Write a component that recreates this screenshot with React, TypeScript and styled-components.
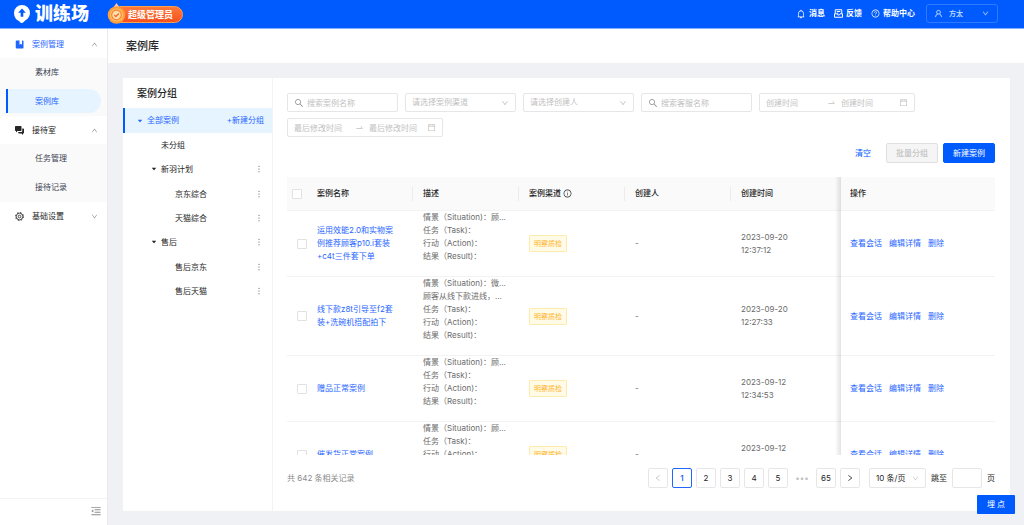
import React from 'react';
import styled, { createGlobalStyle } from 'styled-components';
import {
  AiOutlineBell,
  AiOutlineCalendar,
  AiOutlineDown,
  AiOutlineInfoCircle,
  AiOutlineLeft,
  AiOutlineMenuFold,
  AiOutlineMore,
  AiOutlineQuestionCircle,
  AiOutlineRight,
  AiOutlineSearch,
  AiOutlineSwapRight,
  AiOutlineUp,
  AiOutlineUser,
  AiFillCaretDown,
} from 'react-icons/ai';

const color = {
  primary: '#005bff',
  link: '#1f66ff',
  text: '#262626',
  sub: '#6b6b6b',
  hint: '#bfbfbf',
  border: '#e6e6e8',
  line: '#f3f3f3',
  page: '#eff1f5',
  active: '#e6f4ff',
};

const GlobalStyle = createGlobalStyle`
  *, *::before, *::after { box-sizing: border-box; }
  body {
    margin: 0;
    color: ${color.text};
    background: ${color.page};
    font: 8px/13px Inter, "Noto Sans CJK SC", sans-serif;
  }
  button, input, select { font: inherit; color: inherit; }
  button { cursor: pointer; padding: 0; border: 0; background: none; }
  a { text-decoration: none; color: inherit; }
  ul { list-style: none; margin: 0; padding: 0; }
  h1, h2 { margin: 0; }
  svg { display: block; flex: none; }
`;

const Page = styled.div`
  display: flex;
  flex-direction: column;
  height: 100vh;
`;

/* ---------- top bar ---------- */

const TopBar = styled.header`
  flex: none;
  display: flex;
  align-items: center;
  height: 29px;
  padding: 0 26px 1px 13px;
  color: #fff;
  background: ${color.primary};
  border-bottom: 1px solid #84b2ff;
`;

const Brand = styled.a`
  display: flex;
  align-items: center;
  gap: 4px;
  font-size: 18px;
  line-height: 26px;
  font-weight: 900;
`;

const RoleBadge = styled.div`
  display: flex;
  align-items: center;
  height: 22px;
  margin-left: 18px;
`;

const RoleLabel = styled.span`
  height: 17px;
  margin: 2px 0 0 -15px;
  padding: 0 9px 0 16px;
  border: 1px solid #ffa04d;
  border-radius: 9px;
  background: linear-gradient(#ff7a3a, #f5511e);
  font-size: 9px;
  line-height: 15px;
  font-weight: 700;
`;

const Medal = styled.svg`
  position: relative;
  z-index: 1;
`;

const TopLinks = styled.nav`
  display: flex;
  align-items: center;
  gap: 9px;
  margin-left: auto;
  font-weight: 600;
`;

const TopLink = styled.a`
  display: flex;
  align-items: center;
  gap: 3px;
`;

const UserButton = styled.button`
  display: flex;
  align-items: center;
  width: 72px;
  height: 19px;
  margin-left: 2px;
  padding: 0 8px 0 7px;
  gap: 6px;
  border: 1px solid #2f7bff;
  border-radius: 3px;
  color: #b5d2ff;
  font-size: 7px;

  svg { stroke: currentColor; stroke-width: 30px; }
  svg:last-child { margin-left: auto; }
`;

/* ---------- side menu ---------- */

const Body = styled.div`
  flex: 1;
  display: flex;
  min-height: 0;
`;

const Sidebar = styled.aside`
  flex: none;
  display: flex;
  flex-direction: column;
  width: 108px;
  background: #fff;
  border-right: 1px solid #e9ebef;
`;

const Menu = styled.nav`
  flex: 1;
  padding-top: 1px;
`;

const MenuTitle = styled.button<{ $active?: boolean }>`
  display: flex;
  align-items: center;
  width: 100%;
  height: 28px;
  padding: 0 9px 0 15px;
  color: ${(p) => (p.$active ? color.link : color.text)};

  svg:last-child { margin-left: auto; color: #8c8c8c; }
`;

const MenuText = styled.span`
  margin-left: 8px;
`;

const SubMenu = styled.ul`
  background: #fafafa;
`;

const SubItem = styled.li`
  height: 29px;
  padding: 2px 6px 3px;
`;

const SubLink = styled.a<{ $active?: boolean }>`
  display: block;
  height: 24px;
  padding-left: 27px;
  line-height: 24px;
  border-left: 2px solid ${(p) => (p.$active ? color.primary : 'transparent')};
  border-radius: 0 12px 12px 0;
  color: ${(p) => (p.$active ? color.link : '#3c4353')};
  background: ${(p) => (p.$active ? color.active : 'transparent')};
`;

const SidebarFoot = styled.div`
  display: flex;
  justify-content: flex-end;
  align-items: center;
  height: 27px;
  padding: 0 5px 3px 0;
  border-top: 1px solid ${color.line};
  color: #8c8c8c;
`;

/* ---------- page ---------- */

const Main = styled.main`
  flex: 1;
  display: flex;
  flex-direction: column;
  min-width: 0;
`;

const PageTitle = styled.h1`
  flex: none;
  padding: 0 18px;
  background: #fff;
  font-size: 11px;
  line-height: 34px;
  font-weight: 500;
`;

const Card = styled.section`
  flex: 1;
  display: flex;
  min-height: 0;
  margin: 15px 14px 14px 15px;
  background: #fff;
`;

const GroupPanel = styled.div`
  flex: none;
  width: 150px;
  border-right: 1px solid ${color.line};
`;

const GroupTitle = styled.h2`
  padding-left: 14px;
  font-size: 10px;
  line-height: 30px;
  font-weight: 500;
`;

const RootRow = styled.div`
  display: flex;
  align-items: center;
  height: 25px;
  padding: 0 8px 0 11px;
  border-left: 2px solid ${color.primary};
  background: ${color.active};
  color: ${color.link};
`;

const AddGroup = styled.button`
  margin-left: auto;
`;

const TreeRow = styled.div<{ $level: number }>`
  display: flex;
  align-items: center;
  height: 24px;
  padding: 0 8px 0 ${(p) => 13 + p.$level * 14}px;
`;

const TreeToggle = styled.button`
  display: flex;
  align-items: center;
  justify-content: center;
  width: 7px;
  height: 13px;
  margin-right: 4px;
`;

const TreeLabel = styled.a<{ $leaf?: boolean }>`
  padding-left: ${(p) => (p.$leaf ? 11 : 0)}px;
`;

const TreeChildren = styled.ul`
  padding-top: 1px;
`;

const MoreButton = styled.button`
  margin-left: auto;
  color: #404040;
`;

const Content = styled.div`
  flex: 1;
  display: flex;
  flex-direction: column;
  min-width: 0;
  padding: 15px 15px 23px 14px;
`;

const Filters = styled.form`
  display: flex;
  flex-wrap: wrap;
  gap: 6px 7px;
`;

const Field = styled.label<{ $wide?: boolean }>`
  display: flex;
  align-items: center;
  width: ${(p) => (p.$wide ? 156 : 111)}px;
  height: 19px;
  padding: 0 6px;
  border: 1px solid ${color.border};
  border-radius: 2px;
  color: ${color.hint};
  background: #fff;
`;

const SearchIcon = styled(AiOutlineSearch)`
  margin-right: 3px;
  color: #8c8c8c;
`;

const TextInput = styled.input`
  flex: 1;
  min-width: 0;
  width: 0;
  height: 17px;
  padding: 0;
  border: 0;
  outline: 0;
  background: transparent;

  &::placeholder { color: ${color.hint}; opacity: 1; }
`;

const RangeArrow = styled(AiOutlineSwapRight)`
  margin: 0 5px 0 3px;
`;

const PlainSelect = styled.select`
  flex: 1;
  min-width: 0;
  height: 17px;
  padding: 0;
  border: 0;
  outline: 0;
  appearance: none;
  background: transparent;
`;

const Actions = styled.div`
  display: flex;
  justify-content: flex-end;
  gap: 5px;
  margin: 6px 0 14px;
`;

const Button = styled.button<{ $kind: 'text' | 'plain' | 'primary' }>`
  height: 20px;
  padding: 0 9px;
  border: 1px solid ${(p) => ({ text: 'transparent', plain: '#dfdfdf', primary: color.primary })[p.$kind]};
  border-radius: 2px;
  color: ${(p) => ({ text: color.primary, plain: '#b8b8b8', primary: '#fff' })[p.$kind]};
  background: ${(p) => ({ text: 'none', plain: '#f5f5f5', primary: color.primary })[p.$kind]};
`;

/* ---------- table ---------- */

const TableScroll = styled.div`
  flex: 1;
  min-height: 0;
  overflow: auto;
  scrollbar-width: none;
`;

const Table = styled.table`
  width: 100%;
  table-layout: fixed;
  border-collapse: separate;
  border-spacing: 0;
`;

const Th = styled.th<{ $divided?: boolean }>`
  position: sticky;
  top: 0;
  z-index: 2;
  height: 34px;
  padding: 0 0 0 10px;
  text-align: left;
  font-weight: 500;
  background-color: #fafafa;
  border-bottom: 1px solid ${color.line};
  background-image: ${(p) => (p.$divided ? 'linear-gradient(#ececec, #ececec)' : 'none')};
  background-size: 1px 14px;
  background-position: right center;
  background-repeat: no-repeat;
`;

const ThLabel = styled.span`
  display: flex;
  align-items: center;
  gap: 2px;
`;

const Td = styled.td`
  padding: 0 0 0 10px;
  color: ${color.sub};
  border-bottom: 1px solid ${color.line};
`;

const pinned = `
  position: sticky;
  right: 0;

  &::before {
    content: '';
    position: absolute;
    top: 0;
    bottom: -1px;
    left: -5px;
    width: 6px;
    background: linear-gradient(to right, rgba(0, 0, 0, 0), rgba(0, 0, 0, 0.11));
  }
`;

const PinnedTh = styled(Th)`
  ${pinned}
  z-index: 3;
`;

const PinnedTd = styled(Td)`
  ${pinned}
  background: #fff;
`;

const CheckTh = styled(Th)`
  padding-left: 5px;
`;

const CheckTd = styled(Td)`
  padding-left: 10px;
`;

const NameTd = styled(Td)`
  padding-right: 16px;
  color: ${color.link};
`;

const Checkbox = styled.input`
  display: block;
  appearance: none;
  width: 10px;
  height: 10px;
  margin: 0;
  border: 1px solid #e2e2e2;
  border-radius: 1px;
  background: #fff;

  &:checked { background: ${color.primary}; }
`;

const DescLine = styled.div`
  height: 13px;
  white-space: nowrap;
`;

const Tag = styled.span`
  display: inline-block;
  height: 17px;
  padding: 0 4px;
  border: 1px solid #ffecac;
  border-radius: 1px;
  background: #fffbe6;
  color: #ffb52e;
  font-size: 7px;
  line-height: 15px;
`;

const RowActions = styled.div`
  display: flex;
  gap: 7px;
  color: ${color.link};
`;

/* ---------- footer ---------- */

const Footer = styled.footer`
  flex: none;
  display: flex;
  align-items: center;
  margin-top: 13px;
`;

const Total = styled.span`
  margin-right: auto;
  color: #8c8c8c;
`;

const Pager = styled.nav`
  display: flex;
  gap: 4px;
`;

const PageButton = styled.button<{ $active?: boolean }>`
  display: flex;
  align-items: center;
  justify-content: center;
  width: 20px;
  height: 20px;
  border: 1px solid ${(p) => (p.$active ? color.link : color.border)};
  border-radius: 2px;
  color: ${(p) => (p.$active ? color.link : color.text)};
  font-weight: ${(p) => (p.$active ? 600 : 400)};

  &:disabled { color: ${color.hint}; }
`;

const PagerDots = styled.span`
  width: 20px;
  line-height: 20px;
  text-align: center;
  color: ${color.hint};
`;

const SizeField = styled.label`
  display: flex;
  align-items: center;
  width: 57px;
  height: 20px;
  margin: 0 5px 0 9px;
  padding: 0 6px;
  border: 1px solid ${color.border};
  border-radius: 2px;

  svg { color: ${color.hint}; }
`;

const JumpLabel = styled.label`
  display: flex;
  align-items: center;
  gap: 5px;
`;

const JumpInput = styled.input`
  width: 30px;
  height: 20px;
  padding: 0 4px;
  border: 1px solid ${color.border};
  border-radius: 2px;
`;

const TrackButton = styled.button`
  position: fixed;
  right: 9px;
  bottom: 11px;
  z-index: 5;
  width: 38px;
  height: 19px;
  border-radius: 1px;
  color: #fff;
  background: ${color.primary};
`;

/* ---------- drawings ---------- */

const LogoMark = () => (
  <svg width="18" height="20" viewBox="0 0 18 20" aria-hidden="true">
    <path d="M9 1a8 8 0 0 1 8 8c0 3.400-2 5.800-4.400 7.300-1.400.9-2.200 2.700-4.100 2.700-1.200 0-1.500-1.300-2.700-2C3 15.600 1 12.800 1 9a8 8 0 0 1 8-8z" fill="#fff" />
    <path d="M9 4.600 12.800 8.800h-2.500v4H7.700v-4H5.200z" fill={color.primary} />
  </svg>
);

const MedalMark = () => (
  <Medal width="19" height="22" viewBox="0 0 19 22" aria-hidden="true">
    <path d="M9.500 0 13 5H6z" fill="#ffc9a0" />
    <circle cx="9.500" cy="12" r="8.800" fill="#ff9d3c" />
    <circle cx="9.500" cy="12" r="6.600" fill="#ffc46b" />
    <circle cx="9.500" cy="12" r="5.400" fill="#ff7d2b" />
    <circle cx="9.500" cy="12" r="4.200" fill="#ffe0a8" />
    <path d="m7.300 12 1.600 1.600 2.900-3.100" fill="none" stroke="#f5642a" strokeWidth="1.300" />
  </Medal>
);

const FeedbackIcon = () => (
  <svg width="9" height="9" viewBox="0 0 18 18" fill="none" stroke="currentColor" strokeWidth="2" aria-hidden="true">
    <path d="M2.500 9V1.500h13V9M5.500 5h7M5.500 8.500h3" />
    <path d="M1 9.500v7h16v-7h-4.500L10.500 12h-3l-2-2.500z" />
  </svg>
);

const BookIcon = () => (
  <svg width="9" height="9" viewBox="0 0 18 18" fill="currentColor" aria-hidden="true">
    <path d="M3 1h6v8.500l2.500-2 2.500 2V1h1.500A1.500 1.500 0 0 1 17 2.500v13a1.500 1.500 0 0 1-1.500 1.500H3a1.500 1.500 0 0 1-1.500-1.500v-13A1.500 1.500 0 0 1 3 1z" />
  </svg>
);

const ChatIcon = () => (
  <svg width="9" height="9" viewBox="0 0 18 18" fill="currentColor" aria-hidden="true">
    <path d="M1.500 0h10A1.500 1.500 0 0 1 13 1.500v7A1.500 1.500 0 0 1 11.500 10H5l-3 3v-3h-.5A1.500 1.500 0 0 1 0 8.500v-7A1.500 1.500 0 0 1 1.500 0z" />
    <path d="M14.500 5h2A1.500 1.500 0 0 1 18 6.500v7a1.500 1.500 0 0 1-1.500 1.500H16v3l-3-3H8a1.500 1.500 0 0 1-1.500-1.500V12H13a1.500 1.500 0 0 0 1.500-1.500z" />
  </svg>
);

const GearIcon = () => (
  <svg width="9" height="9" viewBox="0 0 18 18" fill="none" stroke="currentColor" aria-hidden="true">
    <circle cx="9" cy="9" r="6.500" strokeWidth="1.600" />
    <circle cx="9" cy="9" r="8" strokeWidth="1.800" strokeDasharray="3.140 3.140" />
    <circle cx="9" cy="9" r="2.600" strokeWidth="1.600" />
  </svg>
);

/* ---------- data ---------- */

const menu = [
  { title: '案例管理', icon: <BookIcon />, items: ['素材库', '案例库'], active: true },
  { title: '接待室', icon: <ChatIcon />, items: ['任务管理', '接待记录'] },
  { title: '基础设置', icon: <GearIcon />, items: [] },
];

const groups = [
  { name: '新羽计划', children: ['京东综合', '天猫综合'] },
  { name: '售后', children: ['售后京东', '售后天猫'] },
];

const rest = ['任务（Task)：', '行动（Action)：', '结果（Result)：'];

const cases = [
  { name: '运用效能2.0和实物案例推荐顾客p10.i套装+c4t三件套下单', desc: ['情景（Situation)：顾...', ...rest, ''], date: '2023-09-20', time: '12:37:12' },
  { name: '线下款z8t引导至f2套装+洗碗机搭配拍下', desc: ['情景（Situation)：微...', '顾客从线下款进线，...', ...rest, ''], date: '2023-09-20', time: '12:27:33' },
  { name: '赠品正常案例', desc: ['情景（Situation)：顾...', ...rest, ''], date: '2023-09-12', time: '12:34:53' },
  { name: '催发货正常案例', desc: ['情景（Situation)：顾...', ...rest, ''], date: '2023-09-12', time: '12:30:26' },
];

const SearchField = ({ hint }: { hint: string }) => (
  <Field>
    <SearchIcon size={10} />
    <TextInput placeholder={hint} aria-label={hint} />
  </Field>
);

const SelectField = ({ hint }: { hint: string }) => (
  <Field>
    <PlainSelect aria-label={hint}>
      <option>{hint}</option>
    </PlainSelect>
    <AiOutlineDown size={8} />
  </Field>
);

const RangeField = ({ hint }: { hint: string }) => (
  <Field as="div" $wide>
    <TextInput placeholder={hint} aria-label={`${hint}（起）`} />
    <RangeArrow size={9} />
    <TextInput placeholder={hint} aria-label={`${hint}（止）`} />
    <AiOutlineCalendar size={9} />
  </Field>
);

export default function App() {
  return (
    <Page>
      <GlobalStyle />
      <TopBar>
        <Brand href="#">
          <LogoMark />
          训练场
        </Brand>
        <RoleBadge>
          <MedalMark />
          <RoleLabel>超级管理员</RoleLabel>
        </RoleBadge>
        <TopLinks>
          <TopLink href="#"><AiOutlineBell size={10} />消息</TopLink>
          <TopLink href="#"><FeedbackIcon />反馈</TopLink>
          <TopLink href="#"><AiOutlineQuestionCircle size={9} />帮助中心</TopLink>
          <UserButton>
            <AiOutlineUser size={9} />
            方太
            <AiOutlineDown size={7} />
          </UserButton>
        </TopLinks>
      </TopBar>

      <Body>
        <Sidebar>
          <Menu>
            {menu.map((m) => (
              <div key={m.title}>
                <MenuTitle $active={m.active}>
                  {m.icon}
                  <MenuText>{m.title}</MenuText>
                  {m.title === '基础设置' ? <AiOutlineDown size={7} /> : <AiOutlineUp size={7} />}
                </MenuTitle>
                <SubMenu>
                  {m.items.map((item) => (
                    <SubItem key={item}>
                      <SubLink href="#" $active={item === '案例库'}>{item}</SubLink>
                    </SubItem>
                  ))}
                </SubMenu>
              </div>
            ))}
          </Menu>
          <SidebarFoot>
            <button aria-label="收起菜单"><AiOutlineMenuFold size={12} /></button>
          </SidebarFoot>
        </Sidebar>

        <Main>
          <PageTitle>案例库</PageTitle>
          <Card>
            <GroupPanel>
              <GroupTitle>案例分组</GroupTitle>
              <RootRow>
                <TreeToggle aria-label="收起全部案例"><AiFillCaretDown size={6} /></TreeToggle>
                <TreeLabel href="#">全部案例</TreeLabel>
                <AddGroup>+新建分组</AddGroup>
              </RootRow>
              <ul>
                <li>
                  <TreeRow $level={1}><TreeLabel href="#" $leaf>未分组</TreeLabel></TreeRow>
                </li>
                {groups.map((g) => (
                  <li key={g.name}>
                    <TreeRow $level={1}>
                      <TreeToggle aria-label={`收起${g.name}`}><AiFillCaretDown size={6} /></TreeToggle>
                      <TreeLabel href="#">{g.name}</TreeLabel>
                      <MoreButton aria-label="更多"><AiOutlineMore size={10} /></MoreButton>
                    </TreeRow>
                    <TreeChildren>
                      {g.children.map((c) => (
                        <li key={c}>
                          <TreeRow $level={2}>
                            <TreeLabel href="#" $leaf>{c}</TreeLabel>
                            <MoreButton aria-label="更多"><AiOutlineMore size={10} /></MoreButton>
                          </TreeRow>
                        </li>
                      ))}
                    </TreeChildren>
                  </li>
                ))}
              </ul>
            </GroupPanel>

            <Content>
              <Filters>
                <SearchField hint="搜索案例名称" />
                <SelectField hint="请选择案例渠道" />
                <SelectField hint="请选择创建人" />
                <SearchField hint="搜索客服名称" />
                <RangeField hint="创建时间" />
                <RangeField hint="最后修改时间" />
              </Filters>
              <Actions>
                <Button $kind="text">清空</Button>
                <Button $kind="plain" disabled>批量分组</Button>
                <Button $kind="primary">新建案例</Button>
              </Actions>

              <TableScroll>
                <Table>
                  <colgroup>
                    <col style={{ width: 20 }} />
                    <col style={{ width: 106 }} />
                    <col style={{ width: 106 }} />
                    <col style={{ width: 106 }} />
                    <col style={{ width: 106 }} />
                    <col />
                    <col style={{ width: 155 }} />
                  </colgroup>
                  <thead>
                    <tr>
                      <CheckTh><Checkbox type="checkbox" aria-label="全选" /></CheckTh>
                      <Th $divided>案例名称</Th>
                      <Th $divided>描述</Th>
                      <Th $divided><ThLabel>案例渠道<AiOutlineInfoCircle size={9} /></ThLabel></Th>
                      <Th $divided>创建人</Th>
                      <Th>创建时间</Th>
                      <PinnedTh>操作</PinnedTh>
                    </tr>
                  </thead>
                  <tbody>
                    {cases.map((c) => (
                      <tr key={c.name}>
                        <CheckTd><Checkbox type="checkbox" aria-label={c.name} /></CheckTd>
                        <NameTd><a href="#">{c.name}</a></NameTd>
                        <Td>{c.desc.map((line, i) => <DescLine key={i}>{line}</DescLine>)}</Td>
                        <Td><Tag>明察质检</Tag></Td>
                        <Td>-</Td>
                        <Td>{c.date}<br />{c.time}</Td>
                        <PinnedTd>
                          <RowActions>
                            <a href="#">查看会话</a>
                            <a href="#">编辑详情</a>
                            <a href="#">删除</a>
                          </RowActions>
                        </PinnedTd>
                      </tr>
                    ))}
                  </tbody>
                </Table>
              </TableScroll>

              <Footer>
                <Total>共 642 条相关记录</Total>
                <Pager aria-label="分页">
                  <PageButton disabled aria-label="上一页"><AiOutlineLeft size={8} /></PageButton>
                  {[1, 2, 3, 4, 5].map((n) => <PageButton key={n} $active={n === 1}>{n}</PageButton>)}
                  <PagerDots>•••</PagerDots>
                  <PageButton>65</PageButton>
                  <PageButton aria-label="下一页"><AiOutlineRight size={8} /></PageButton>
                </Pager>
                <SizeField>
                  <PlainSelect aria-label="每页条数">
                    <option>10 条/页</option>
                  </PlainSelect>
                  <AiOutlineDown size={7} />
                </SizeField>
                <JumpLabel>
                  跳至
                  <JumpInput />
                  页
                </JumpLabel>
              </Footer>
            </Content>
          </Card>
        </Main>
      </Body>
      <TrackButton>埋 点</TrackButton>
    </Page>
  );
}
